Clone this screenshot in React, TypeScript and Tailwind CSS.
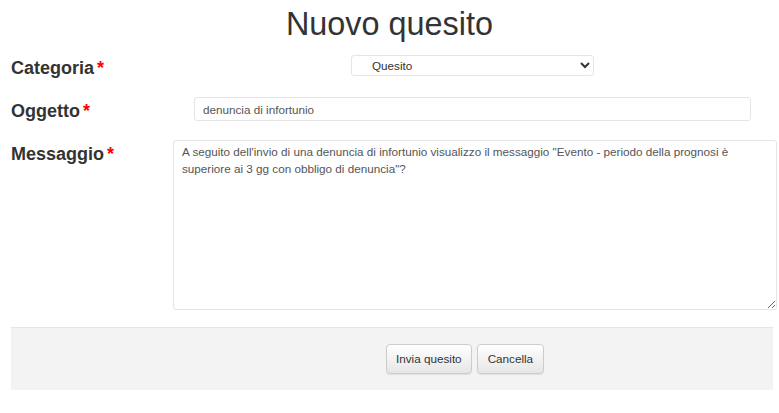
import { useState } from 'react';

const font = { fontFamily: '"Liberation Sans", Arial, Helvetica, sans-serif' };

// shared look of the grey footer buttons
const btn =
  'h-[30px] text-[11.7px] text-[#333] border border-[#ccc] rounded-[4px] bg-gradient-to-b from-white to-[#e6e6e6] shadow-[inset_0_1px_0_rgba(255,255,255,0.15),0_1px_1px_rgba(0,0,0,0.075)]';

function Label({ text }: { text: string }) {
  return (
    <label className="block text-[18px] font-bold text-[#333] leading-[20px] whitespace-nowrap">
      {text}
      <span className="text-[#ff0000] ml-[3px]">*</span>
    </label>
  );
}

export default function App() {
  const [categoria, setCategoria] = useState('Quesito');
  const [oggetto, setOggetto] = useState('denuncia di infortunio');
  const [messaggio, setMessaggio] = useState(
    'A seguito dell\'invio di una denuncia di infortunio visualizzo il messaggio "Evento - periodo della prognosi è superiore ai 3 gg con obbligo di denuncia"?'
  );

  return (
    <div className="w-[779px] h-[413px] bg-white text-[#333]" style={font}>
      <h1 className="text-[32.4px] leading-[36px] font-normal text-center pt-[6px] text-[#333]">Nuovo quesito</h1>

      <form className="px-[11px] mt-[13px]" onSubmit={(e) => e.preventDefault()}>
        {/* categoria */}
        <div className="flex items-start h-[21px]">
          <div className="w-[340px] shrink-0 pt-[3px]">
            <Label text="Categoria" />
          </div>
          <select
            value={categoria}
            onChange={(e) => setCategoria(e.target.value)}
            className="w-[243px] shrink-0 h-[21px] border border-[#e5e5e5] rounded-[3px] bg-white text-[11.7px] text-[#333] pl-[16px] pr-1"
          >
            <option>Quesito</option>
            <option>Segnalazione</option>
          </select>
        </div>

        {/* oggetto */}
        <div className="flex items-start mt-[21px]">
          <div className="w-[183px] shrink-0 pt-[4px]">
            <Label text="Oggetto" />
          </div>
          <input
            value={oggetto}
            onChange={(e) => setOggetto(e.target.value)}
            className="w-[557px] shrink-0 h-[24px] border border-[#e5e5e5] rounded-[3px] px-[8px] text-[11.7px] text-[#555] outline-none"
          />
        </div>

        {/* messaggio */}
        <div className="flex items-start mt-[19px]">
          <div className="w-[162px] shrink-0 pt-[4px]">
            <Label text="Messaggio" />
          </div>
          <textarea
            value={messaggio}
            onChange={(e) => setMessaggio(e.target.value)}
            className="w-[604px] shrink-0 h-[170px] border border-[#e5e5e5] rounded-[3px] px-[8px] pt-[3px] text-[11.7px] leading-[16.7px] text-[#555] outline-none"
          />
        </div>

        {/* azioni */}
        <div className="mt-[17px] w-[762px] h-[63px] bg-[#f3f3f3] border-t border-[#e5e5e5] flex items-center pl-[375px] gap-[5px]">
          <button type="submit" className={`${btn} px-[9px]`}>
            Invia quesito
          </button>
          <button type="button" className={`${btn} px-[10px]`}>
            Cancella
          </button>
        </div>
      </form>
    </div>
  );
}
